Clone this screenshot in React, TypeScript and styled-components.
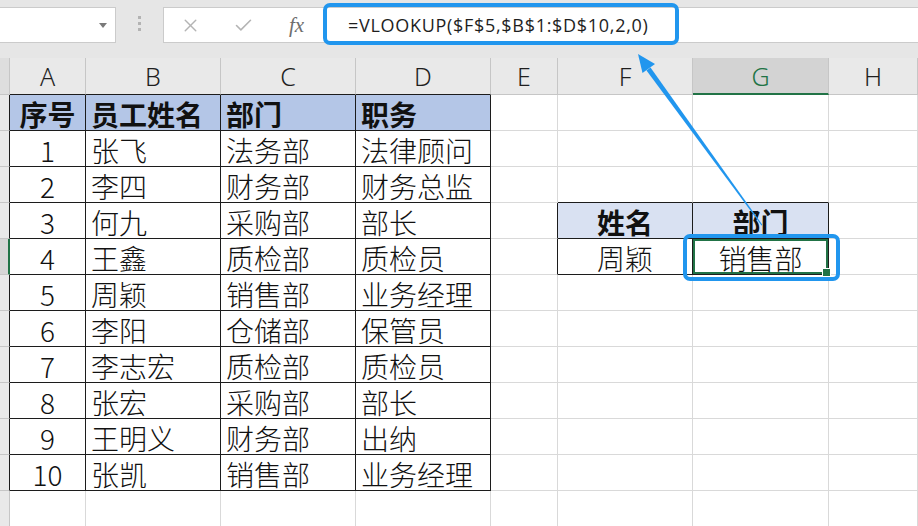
import React from "react";
import styled, { createGlobalStyle } from "styled-components";
import { X, Check } from "lucide-react";

const GlobalStyle = createGlobalStyle`
  html, body {
    margin: 0;
    padding: 0;
    background: #ffffff;
    overflow: hidden;
  }
  body {
    font-family: "Noto Sans CJK SC", "Noto Sans", sans-serif;
  }
`;

const BLACK = "#1c1c1c";
const GRID = "#d9d9d9";
const HEAD_LINE = "#c6c6c6";
const GREEN = "#217346";
const BLUE = "#2196ee";

const Page = styled.div`
  position: relative;
  width: 918px;
  height: 526px;
  overflow: hidden;
  background: #fff;
`;

const Toolbar = styled.div`
  display: flex;
  align-items: flex-start;
  box-sizing: border-box;
  height: 58px;
  padding-top: 7px;
  background: #e6e6e6;
`;

const NameBox = styled.div`
  position: relative;
  box-sizing: border-box;
  width: 116px;
  height: 36px;
  background: #fff;
  border: 1px solid #cbcbcb;
  border-left: none;
  &::after {
    content: "";
    position: absolute;
    right: 8px;
    top: 15px;
    border-left: 4px solid transparent;
    border-right: 4px solid transparent;
    border-top: 5px solid #7a7a7a;
  }
`;

const Grip = styled.div`
  display: flex;
  flex-direction: column;
  align-items: center;
  gap: 3px;
  width: 47px;
  padding-top: 9px;
  span {
    width: 3px;
    height: 3px;
    background: #b3b3b3;
  }
`;

const FormulaBar = styled.div`
  flex: 1;
  display: flex;
  align-items: center;
  box-sizing: border-box;
  height: 36px;
  background: #fff;
  border: 1px solid #cbcbcb;
  border-right: none;
`;

const IconSlot = styled.div`
  width: 53px;
  display: flex;
  justify-content: center;
  align-items: center;
  color: #b4b4b4;
`;

const Fx = styled.span`
  font-family: "Liberation Serif", "DejaVu Serif", serif;
  font-style: italic;
  font-size: 21px;
  color: #6e6e6e;
  line-height: 1;
`;

const FormulaField = styled.div`
  position: relative;
  display: flex;
  align-items: center;
  height: 100%;
  padding: 0 30px 0 25px;
  font-family: "Open Sans", "Noto Sans", sans-serif;
  font-size: 18px;
  letter-spacing: 0.7px;
  color: #1e1e1e;
  white-space: nowrap;
  &::before {
    content: "";
    position: absolute;
    left: 0;
    right: 0;
    top: -5px;
    bottom: -3px;
    border: 4px solid ${BLUE};
    border-radius: 7px;
  }
`;

const Sheet = styled.div`
  display: grid;
  grid-template-columns: 10px 76px 135px 135px 135px 67px 135px 136px 1fr;
  grid-template-rows: 37px;
  grid-auto-rows: 36px;
`;

const ColHead = styled.div<{ $active?: boolean; $bottom: string }>`
  display: flex;
  align-items: center;
  justify-content: center;
  box-sizing: border-box;
  border-right: 1px solid ${HEAD_LINE};
  border-bottom: ${(p) => (p.$active ? `2px solid ${GREEN}` : `1px solid ${p.$bottom}`)};
  background: ${(p) => (p.$active ? "#d3d3d3" : "#e9e9e9")};
  color: ${(p) => (p.$active ? GREEN : "#1f1f1f")};
  font-family: "Noto Sans", "Open Sans", sans-serif;
  font-size: 25px;
  font-weight: 300;
`;

const RowHead = styled.div<{ $active?: boolean; $right: string }>`
  box-sizing: border-box;
  background: ${(p) => (p.$active ? "#d6d6d6" : "#e9e9e9")};
  border-bottom: 1px solid ${HEAD_LINE};
  border-right: ${(p) => (p.$active ? `2px solid ${GREEN}` : `1px solid ${p.$right}`)};
`;

const Corner = styled.div`
  box-sizing: border-box;
  background: #dedede;
  border-right: 1px solid ${HEAD_LINE};
  border-bottom: 1px solid ${HEAD_LINE};
`;

const Cell = styled.div<{
  $fill?: string;
  $bold?: boolean;
  $align: "left" | "center";
  $right: string;
  $bottom: string;
  $selected?: boolean;
}>`
  position: relative;
  z-index: ${(p) => (p.$selected ? 2 : "auto")};
  display: flex;
  align-items: center;
  justify-content: ${(p) => (p.$align === "center" ? "center" : "flex-start")};
  box-sizing: border-box;
  padding-left: ${(p) => (p.$align === "center" ? "0" : "5px")};
  padding-top: 2px;
  background: ${(p) => p.$fill || "#fff"};
  border-right: 1px solid ${(p) => p.$right};
  border-bottom: 1px solid ${(p) => p.$bottom};
  box-shadow: ${(p) => (p.$selected ? `inset 0 0 0 2px ${GREEN}` : "none")};
  font-family: "Noto Sans CJK SC", "Noto Sans", sans-serif;
  font-size: 28px;
  font-weight: ${(p) => (p.$bold ? 700 : 300)};
  color: #111;
  white-space: nowrap;
  line-height: 1;
`;

const FillHandle = styled.span`
  position: absolute;
  right: -3px;
  bottom: -3px;
  width: 7px;
  height: 7px;
  background: ${GREEN};
  border: 1px solid #fff;
`;

const Callout = styled.span`
  position: absolute;
  left: -10px;
  right: -12px;
  top: -5px;
  bottom: -7px;
  border: 4px solid ${BLUE};
  border-radius: 7px;
  pointer-events: none;
`;

const ArrowLayer = styled.svg`
  position: absolute;
  left: 0;
  top: 0;
  z-index: 3;
  pointer-events: none;
`;

const columns = ["A", "B", "C", "D", "E", "F", "G", "H"];

const table: string[][] = [
  ["序号", "员工姓名", "部门", "职务"],
  ["1", "张飞", "法务部", "法律顾问"],
  ["2", "李四", "财务部", "财务总监"],
  ["3", "何九", "采购部", "部长"],
  ["4", "王鑫", "质检部", "质检员"],
  ["5", "周颖", "销售部", "业务经理"],
  ["6", "李阳", "仓储部", "保管员"],
  ["7", "李志宏", "质检部", "质检员"],
  ["8", "张宏", "采购部", "部长"],
  ["9", "王明义", "财务部", "出纳"],
  ["10", "张凯", "销售部", "业务经理"],
];

// F4:G5
const lookup: Record<string, string> = {
  "4-5": "姓名",
  "4-6": "部门",
  "5-5": "周颖",
  "5-6": "销售部",
};

const VISIBLE_ROWS = 12;
const ACTIVE_ROW = 5;
const ACTIVE_COL = 6; // G

const inTable = (r: number, c: number) => r >= 1 && r <= 11 && c <= 3;
const inLookup = (r: number, c: number) => (r === 4 || r === 5) && (c === 5 || c === 6);

const App = () => {
  const cells: React.ReactNode[] = [];

  cells.push(<Corner key="corner" />);
  columns.forEach((col, c) => {
    cells.push(
      <ColHead key={col} $active={c === ACTIVE_COL} $bottom={c <= 3 ? BLACK : HEAD_LINE}>
        {col}
      </ColHead>
    );
  });

  for (let r = 1; r <= VISIBLE_ROWS; r++) {
    cells.push(
      <RowHead key={`rh${r}`} $active={r === ACTIVE_ROW} $right={r <= 11 ? BLACK : HEAD_LINE} />
    );
    columns.forEach((_, c) => {
      let text = "";
      let fill: string | undefined;
      let bold = false;
      let align: "left" | "center" = "left";
      let right = GRID;
      let bottom = GRID;

      if (inTable(r, c)) {
        text = table[r - 1][c];
        right = BLACK;
        bottom = BLACK;
        if (r === 1) {
          fill = "#b4c6e7";
          bold = true;
        }
        align = c === 0 ? "center" : "left";
      }
      if (inLookup(r, c)) {
        text = lookup[`${r}-${c}`];
        right = BLACK;
        bottom = BLACK;
        align = "center";
        if (r === 4) {
          fill = "#d9e1f2";
          bold = true;
        }
      }
      if (c === 4 && (r === 4 || r === 5)) right = BLACK;
      if (r === 3 && (c === 5 || c === 6)) bottom = BLACK;

      const selected = r === ACTIVE_ROW && c === ACTIVE_COL;
      cells.push(
        <Cell
          key={`${r}-${c}`}
          $fill={fill}
          $bold={bold}
          $align={align}
          $right={right}
          $bottom={bottom}
          $selected={selected}
        >
          {text}
          {selected && <FillHandle />}
          {selected && <Callout />}
        </Cell>
      );
    });
  }

  return (
    <Page>
      <GlobalStyle />
      <Toolbar>
        <NameBox />
        <Grip>
          <span />
          <span />
          <span />
        </Grip>
        <FormulaBar>
          <IconSlot>
            <X size={21} strokeWidth={1.6} />
          </IconSlot>
          <IconSlot>
            <Check size={21} strokeWidth={1.8} />
          </IconSlot>
          <IconSlot>
            <Fx>fx</Fx>
          </IconSlot>
          <FormulaField>=VLOOKUP($F$5,$B$1:$D$10,2,0)</FormulaField>
        </FormulaBar>
      </Toolbar>
      <Sheet>{cells}</Sheet>
      <ArrowLayer width="918" height="526" viewBox="0 0 918 526">
        <polygon points="638,54 642.5,73 655,64" fill={BLUE} />
        <polygon points="646.5,70.5 650.5,67.5 762.5,225 761.5,225.5" fill={BLUE} />
      </ArrowLayer>
    </Page>
  );
};

export default App;
